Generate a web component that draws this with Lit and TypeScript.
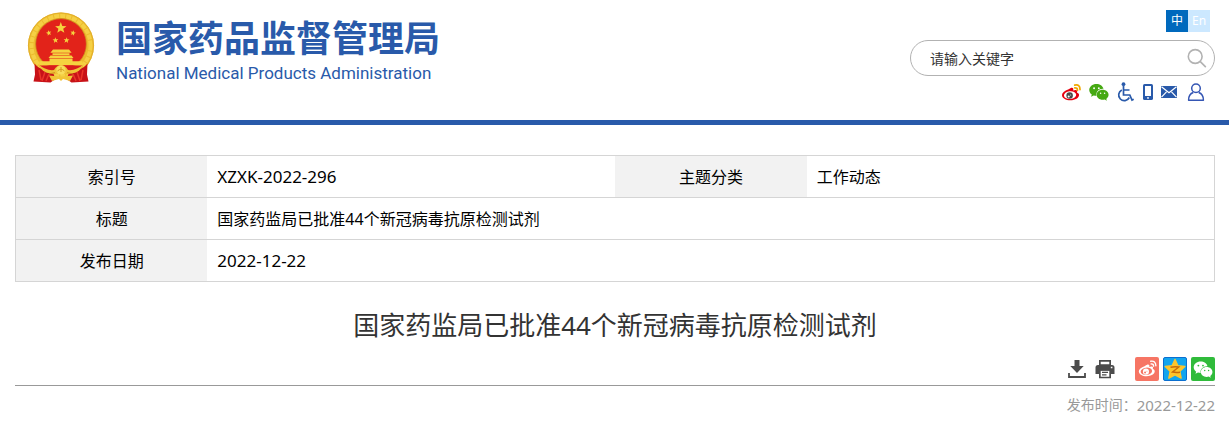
import { LitElement, html, css, svg } from "lit";
import { customElement } from "lit/decorators.js";

const star = (cx: number, cy: number, r: number, turn = 0) => {
  const pts: string[] = [];
  for (let i = 0; i < 10; i++) {
    const a = ((i * 36 - 90 + turn) * Math.PI) / 180;
    const k = i % 2 ? r * 0.42 : r;
    pts.push(`${(cx + k * Math.cos(a)).toFixed(2)},${(cy + k * Math.sin(a)).toFixed(2)}`);
  }
  return pts.join(" ");
};

const emblem = html`
  <svg width="68" height="72" viewBox="0 0 68 72" aria-hidden="true">
    <circle cx="34" cy="33.500" r="33" fill="#ecbb2e" />
    <circle cx="34" cy="33.500" r="29.500" fill="none" stroke="#f5d045" stroke-width="4" stroke-dasharray="5 1" />
    <circle cx="34" cy="33.500" r="32.600" fill="none" stroke="#dfab28" stroke-width="0.8" />
    <circle cx="34" cy="32" r="25.400" fill="#e2231a" stroke="#cf9420" stroke-width="0.8" />
    <g fill="#f5d33f">
      <polygon points="${star(33.8, 16, 6)}" />
      <polygon points="${star(21.8, 21, 2.9, -15)}" />
      <polygon points="${star(46, 21, 2.9, 15)}" />
      <polygon points="${star(28.500, 28.300, 3.1, -5)}" />
      <polygon points="${star(39.500, 28.300, 3.1, 5)}" />
      <path d="M26 37.500h16l2.600 3.200H23.400zM25.500 41.200h17v1.800h-17zM23.500 43.500h21l2 2.500H21.500zM22.500 46.400h23v3.800h-23zM12.500 49.200h43v4H12.500z" />
    </g>
    <path d="M12 53.500h44q-3 5-8 8H20q-5-3-8-8z" fill="#d91c1c" />
    <path d="M7.500 51.500q4 5 9 5.500 6 4 10 5l2 5-5 3.500-17-1 1.500-7z" fill="#c81218" />
    <path d="M60.500 51.500q-4 5-9 5.500-6 4-10 5l-2 5 5 3.500 17-1-1.500-7z" fill="#c81218" />
    <path d="M12 58l2 10M18 60l-3 9M22 62l-3 7M56 58l-2 10M50 60l3 9M46 62l3 7" fill="none" stroke="#ea3529" stroke-width="1.500" />
    <path d="M11 52q8 7 16 6 3-5 7-5t7 5q8 1 16-6-4 9-13 9.500l-6 .5h-8l-6-.5Q15 61 11 52z" fill="#efc236" />
    <circle cx="34" cy="58" r="4.600" fill="#f8dc5c" />
    <path d="M30.500 59q3.500-3.500 7 0M34 55v5" fill="none" stroke="#d39a20" stroke-width="1" />
    <path d="M22 63.500l10 1h4l10-1-3 5.500-7-2-2 2-2-2-7 2z" fill="#f1c437" />
    <path d="M28 60.500l-6 1.500M40 60.500l6 1.500" stroke="#c98c1c" stroke-width="0.800" />
  </svg>
`;

const weiboBody = (main: string, paper: string, ink: string) => svg`
  <path fill="${main}" d="M8.600 7.200C11 5 13.300 4.800 13.800 6.400c.3.900 0 1.600-.1 2.100 2.100-.9 4.400-.9 4.600.7.100.7-.1 1.200-.3 1.700 1.400.5 2.400 1.400 2.400 2.800 0 3.200-4.300 6-9.800 6-5.400 0-9.600-2.500-9.600-6.100 0-2 2.500-4.500 7.600-6.400z" />
  <ellipse cx="10.200" cy="13.800" rx="7" ry="4.500" fill="${paper}" transform="rotate(-6 10.200 13.800)" />
  <circle cx="9.700" cy="14.200" r="3.700" fill="${ink}" />
  <circle cx="8.600" cy="15.300" r="1.200" fill="${paper}" />
  <circle cx="10.900" cy="13.600" r=".6" fill="${paper}" />
`;

const wechatBody = (main: string, eye: string) => svg`
  <path fill="${main}" d="M7.800 1C3.500 1 .2 3.900.2 7.300c0 2 1.100 3.700 2.700 4.900l-.8 2.300 2.800-1.400c1 .3 1.900.4 2.900.4-.8-4.300 2.800-7.600 7.400-7.300C14.600 3.100 11.400 1 7.800 1z" />
  <path fill="${main}" d="M14.300 7.200c-3.600 0-6.300 2.400-6.300 5.300s2.700 5.300 6.300 5.300c.8 0 1.500-.1 2.200-.3l2.300 1.200-.6-1.900c1.400-1 2.400-2.500 2.400-4.300 0-2.900-2.700-5.300-6.300-5.300z" />
  <g fill="${eye}"><circle cx="5.300" cy="5.500" r="1" /><circle cx="10.300" cy="5.500" r="1" /><circle cx="12.200" cy="10.900" r=".8" /><circle cx="16.400" cy="10.900" r=".8" /></g>
`;

@customElement("app-root")
export class AppRoot extends LitElement {
  static styles = css`
    :host {
      display: block;
      background: #fff;
      color: #000;
      font-family: "Noto Sans", "Noto Sans CJK SC", sans-serif;
      font-size: 16px;
      line-height: 24px;
    }
    * { box-sizing: border-box; }
    svg { display: block; }
    a { color: inherit; text-decoration: none; }
    button { border: 0; padding: 0; background: none; cursor: pointer; }
    .header {
      display: flex;
      justify-content: space-between;
      border-bottom: 5px solid #295aaa;
      padding: 10px 14px 18px 27px;
    }
    .brand { display: flex; align-items: flex-start; gap: 21px; color: #295aaa; padding-top: 2px; }
    .names { display: flex; flex-direction: column; padding-top: 8px; }
    .name-zh { font: 700 36px/40px "Liberation Sans", "Noto Sans CJK SC", sans-serif; white-space: nowrap; }
    .name-en { font: 400 17px/26px Roboto, sans-serif; white-space: nowrap; }
    .tools { display: flex; flex-direction: column; align-items: flex-end; width: 305px; }
    .langs { display: flex; margin-right: 5px; }
    .lang {
      width: 22px;
      height: 22px;
      font-size: 12px;
      line-height: 22px;
      text-align: center;
      color: #fff;
      background: #cce8ff;
    }
    .lang.current { background: #0069bd; }
    .search {
      display: flex;
      align-items: center;
      width: 100%;
      height: 36px;
      margin-top: 8px;
      padding: 0 7px 0 19px;
      border: 1px solid #b2b2b2;
      border-radius: 18px;
    }
    .keyword {
      flex: 1;
      min-width: 0;
      border: 0;
      padding: 0;
      outline: 0;
      background: none;
      font: 14px/20px "Noto Sans CJK SC", sans-serif;
      color: #333;
    }
    .keyword::placeholder { color: #333; opacity: 1; }
    .links { display: flex; align-items: center; gap: 8px; margin: 6px 10px 0 0; height: 20px; }
    .main { padding: 30px 14px 0 15px; }
    .info { width: 100%; table-layout: fixed; border-collapse: collapse; border: 1px solid #d5d5d5; }
    .label-col { width: 16%; }
    .value-col { width: 34%; }
    .info tr { border-bottom: 1px solid #d5d5d5; }
    .info th { background: #f2f2f2; font-weight: 400; text-align: center; }
    .info th, .info td { height: 42px; padding: 0 10px; }
    .info td { text-align: left; }
    .info .figures { font-size: 17px; }
    .title { margin: 23px 0 0; font-size: 26px; line-height: 40px; font-weight: 400; text-align: center; color: #333; }
    .actions {
      display: flex;
      justify-content: flex-end;
      align-items: center;
      padding: 12px 0 4px;
      border-bottom: 1px solid #999;
    }
    .page-tools { display: flex; gap: 8px; margin-right: 20px; }
    .share { display: flex; gap: 4px; }
    .published { display: flex; justify-content: flex-end; margin: 7px 0 0; font-size: 14px; color: #999; }
    .published time { font-size: 15px; }
  `;

  render() {
    return html`
      <header class="header">
        <a class="brand" href="#">
          ${emblem}
          <span class="names">
            <span class="name-zh">国家药品监督管理局</span>
            <span class="name-en">National Medical Products Administration</span>
          </span>
        </a>
        <div class="tools">
          <nav class="langs">
            <a class="lang current" href="#">中</a>
            <a class="lang" href="#">En</a>
          </nav>
          <form class="search" role="search">
            <input class="keyword" type="text" placeholder="请输入关键字" aria-label="请输入关键字" />
            <button type="button" aria-label="搜索">
              <svg width="20" height="20" viewBox="0 0 20 20" fill="none" stroke="#b2b2b2" stroke-width="1.6">
                <circle cx="8.200" cy="8.500" r="6.900" /><path d="M13.100 13.400l5.700 5.700" />
              </svg>
            </button>
          </form>
          <nav class="links">
            <a href="#" aria-label="微博">
              <svg width="20" height="18" viewBox="0 0 22.500 20.500">
                ${weiboBody("#e6000f", "#fff", "#4a4a4a")}
                <path d="M15.500 2.500q6-1.500 6 5M15.600 5.500q3-.4 3 2.700" fill="none" stroke="#f0a800" stroke-width="2" stroke-linecap="round" />
              </svg>
            </a>
            <a href="#" aria-label="微信">
              <svg width="20" height="18" viewBox="0 0 21 19">${wechatBody("#46a913", "#fff")}</svg>
            </a>
            <a href="#" aria-label="无障碍">
              <svg width="18" height="20" viewBox="0 0 18 20" fill="none" stroke="#295aaa" stroke-width="1.700">
                <circle cx="6.500" cy="2.200" r="1.900" fill="#295aaa" stroke="none" />
                <path d="M6.500 4v9h6.300l2.200 5 1.700-.8M6.500 8h6" />
                <path d="M4.800 8A5.600 5.600 0 1 0 12.300 15.500" />
              </svg>
            </a>
            <a href="#" aria-label="手机">
              <svg width="10" height="16" viewBox="0 0 10 16">
                <rect width="10" height="16" rx="1.600" fill="#295aaa" /><path fill="#fff" d="M2 2h6v10H2z" /><circle cx="5" cy="13.900" r=".9" fill="#fff" />
              </svg>
            </a>
            <a href="#" aria-label="邮箱">
              <svg width="16" height="12" viewBox="0 0 16 12">
                <path fill="#295aaa" d="M0 0h16v12H0z" />
                <path d="M.5.800L8 6.800l7.500-6M.5 11.200l5-5.400M15.500 11.200l-5-5.400" fill="none" stroke="#fff" stroke-width="1.200" />
              </svg>
            </a>
            <a href="#" aria-label="登录">
              <svg width="20" height="19" viewBox="0 0 20 19" fill="none" stroke="#3556b4" stroke-width="1.500">
                <circle cx="11" cy="5.200" r="4.300" /><path d="M8.300 9.500C5 10.500 3.600 13 3.600 17.200h14.800c0-4.200-1.400-6.700-4.700-7.700" stroke-linejoin="round" />
              </svg>
            </a>
          </nav>
        </div>
      </header>
      <main class="main">
        <table class="info">
          <colgroup>
            <col class="label-col" /><col class="value-col" /><col class="label-col" /><col class="value-col" />
          </colgroup>
          <tbody>
            <tr>
              <th scope="row">索引号</th><td class="figures">XZXK-2022-296</td>
              <th scope="row">主题分类</th><td>工作动态</td>
            </tr>
            <tr><th scope="row">标题</th><td colspan="3">国家药监局已批准44个新冠病毒抗原检测试剂</td></tr>
            <tr><th scope="row">发布日期</th><td class="figures" colspan="3">2022-12-22</td></tr>
          </tbody>
        </table>
        <h1 class="title">国家药监局已批准44个新冠病毒抗原检测试剂</h1>
        <div class="actions">
          <div class="page-tools">
            <button type="button" aria-label="下载">
              <svg width="20" height="20" viewBox="0 0 20 20" fill="#4c4c4c">
                <path d="M7.500 1h5v6h4.200L10 14 3.300 7h4.200z" /><path d="M2 14v4h16v-4" fill="none" stroke="#4c4c4c" stroke-width="1.800" />
              </svg>
            </button>
            <button type="button" aria-label="打印">
              <svg width="20" height="20" viewBox="0 0 20 20" fill="#4c4c4c">
                <path fill-rule="evenodd" d="M4 1h12v5H4zM5.700 2.700v2.500h8.600V2.700z" />
                <path fill-rule="evenodd" d="M3 6h14q2.500 0 2.500 2.500V15H16v-3.500H4V15H.5V8.500Q.5 6 3 6zM15.800 7.700v1.500h1.600V7.700z" />
                <path fill-rule="evenodd" d="M4 10.500h12v8.700H4zM5.700 11.800v5.900h8.600v-5.900zM7 12.800h6v1.300H7zM7 15.200h4.500v1.300H7z" />
              </svg>
            </button>
          </div>
          <div class="share">
            <a href="#" aria-label="分享到微博">
              <svg width="24" height="24" viewBox="0 0 24 24">
                <rect width="24" height="24" rx="2" fill="#f67564" />
                <g transform="translate(3 3) scale(.82)">
                  ${weiboBody("#fff", "#f67564", "#fff")}
                  <path d="M15.500 1.500q6-1 6.300 5.500M16 4.800q3-.3 3 2.700" fill="none" stroke="#fff" stroke-width="1.700" stroke-linecap="round" />
                </g>
              </svg>
            </a>
            <a href="#" aria-label="分享到QQ空间">
              <svg width="24" height="24" viewBox="0 0 24 24">
                <rect x=".5" y=".5" width="23" height="23" rx="1.500" fill="#12a5ee" stroke="#0b6fd0" />
                <path fill="#fdc52c" stroke="#fdc52c" stroke-width="1.500" stroke-linejoin="round" d="M12 2.500l2.900 6.200 6.900.8-5 4.800 1.300 6.800L12 17.800l-6.100 3.300 1.300-6.800-5-4.800 6.900-.8z" />
                <path d="M7.500 10.200q4.500-1 8.300-.2l-6.300 5q3.500.8 7.500.2" fill="none" stroke="#c66b08" stroke-width="1.500" />
              </svg>
            </a>
            <a href="#" aria-label="分享到微信">
              <svg width="24" height="24" viewBox="0 0 24 24">
                <rect width="24" height="24" rx="2" fill="#30bb3b" />
                <g transform="translate(2.500 3.500) scale(.92)">${wechatBody("#fff", "#30bb3b")}</g>
              </svg>
            </a>
          </div>
        </div>
        <p class="published">发布时间：<time datetime="2022-12-22">2022-12-22</time></p>
      </main>
    `;
  }
}
